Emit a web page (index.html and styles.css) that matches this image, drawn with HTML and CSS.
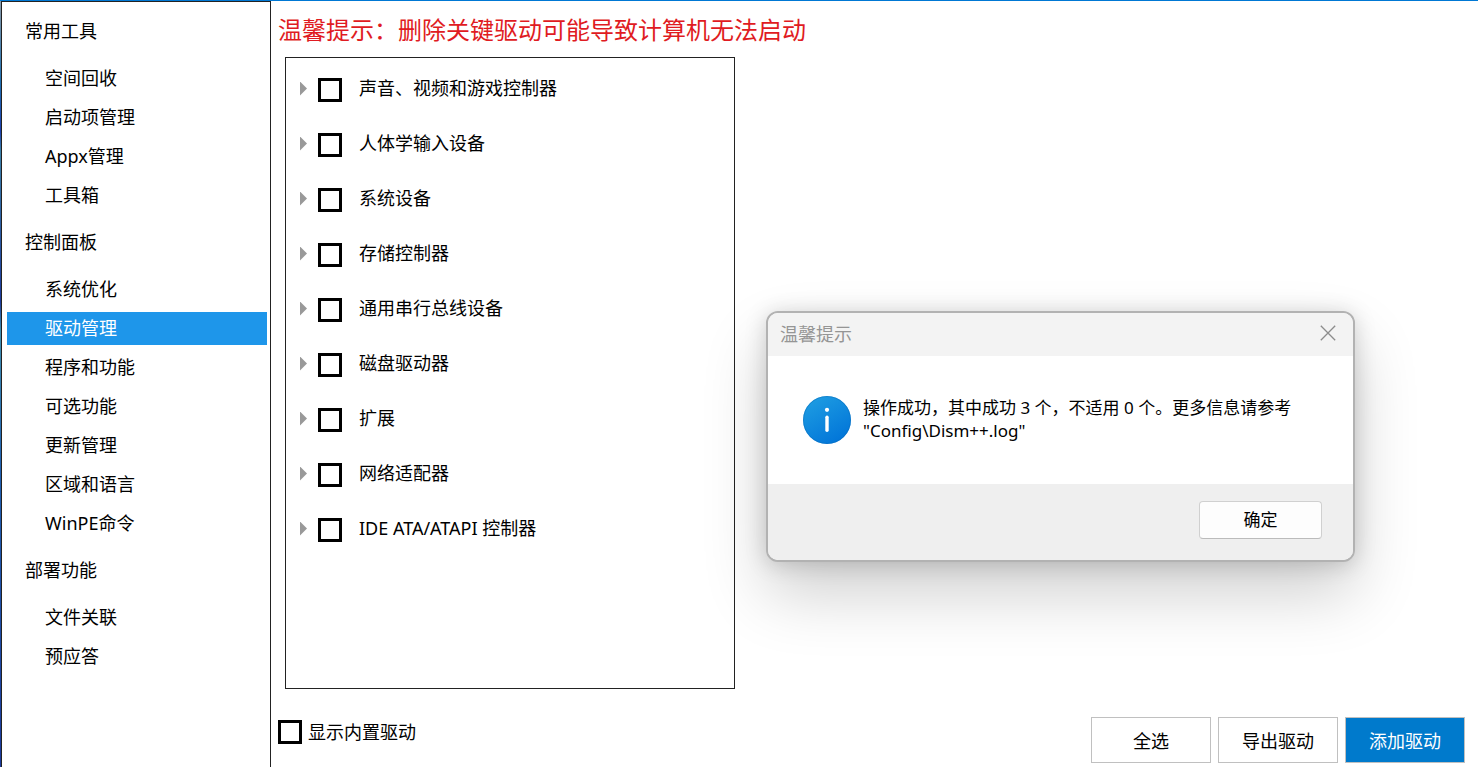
FILE: index.html
```html
<!DOCTYPE html>
<html lang="zh-CN">

<head>
    <meta charset="UTF-8">
    <meta name="viewport" content="width=device-width, initial-scale=1.0">
    <link rel="stylesheet" href="styles.css">
    <title>Dism++</title>
</head>

<body>

    <div class="window">

        <nav class="sidebar">
            <h2>常用工具</h2>
            <ul>
                <li><a href="#">空间回收</a></li>
                <li><a href="#">启动项管理</a></li>
                <li><a href="#">Appx管理</a></li>
                <li><a href="#">工具箱</a></li>
            </ul>
            <h2>控制面板</h2>
            <ul>
                <li><a href="#">系统优化</a></li>
                <li><a href="#" class="active">驱动管理</a></li>
                <li><a href="#">程序和功能</a></li>
                <li><a href="#">可选功能</a></li>
                <li><a href="#">更新管理</a></li>
                <li><a href="#">区域和语言</a></li>
                <li><a href="#">WinPE命令</a></li>
            </ul>
            <h2>部署功能</h2>
            <ul>
                <li><a href="#">文件关联</a></li>
                <li><a href="#">预应答</a></li>
            </ul>
        </nav>

        <main class="content">
            <h1 class="warning">温馨提示：删除关键驱动可能导致计算机无法启动</h1>

            <ul class="driver-tree">
                <li><span class="arrow"></span><input type="checkbox" id="d1"><label for="d1">声音、视频和游戏控制器</label></li>
                <li><span class="arrow"></span><input type="checkbox" id="d2"><label for="d2">人体学输入设备</label></li>
                <li><span class="arrow"></span><input type="checkbox" id="d3"><label for="d3">系统设备</label></li>
                <li><span class="arrow"></span><input type="checkbox" id="d4"><label for="d4">存储控制器</label></li>
                <li><span class="arrow"></span><input type="checkbox" id="d5"><label for="d5">通用串行总线设备</label></li>
                <li><span class="arrow"></span><input type="checkbox" id="d6"><label for="d6">磁盘驱动器</label></li>
                <li><span class="arrow"></span><input type="checkbox" id="d7"><label for="d7">扩展</label></li>
                <li><span class="arrow"></span><input type="checkbox" id="d8"><label for="d8">网络适配器</label></li>
                <li><span class="arrow"></span><input type="checkbox" id="d9"><label for="d9">IDE ATA/ATAPI 控制器</label></li>
            </ul>

            <div class="bottom-bar">
                <div class="show-builtin">
                    <input type="checkbox" id="builtin">
                    <label for="builtin">显示内置驱动</label>
                </div>
                <div class="actions">
                    <button type="button">全选</button>
                    <button type="button">导出驱动</button>
                    <button type="button" class="primary">添加驱动</button>
                </div>
            </div>
        </main>

    </div>

    <!-- message box -->
    <div class="msgbox" role="dialog" aria-labelledby="msg-title">
        <div class="msg-header">
            <span id="msg-title">温馨提示</span>
            <button type="button" class="close-btn" aria-label="关闭">
                <svg width="16" height="16" viewBox="0 0 16 16">
                    <path d="M0.8 0.8 L15.2 15.2 M15.2 0.8 L0.8 15.2" stroke="#8c8c8c" stroke-width="1.3" fill="none" />
                </svg>
            </button>
        </div>
        <div class="msg-body">
            <svg width="48" height="48" viewBox="0 0 48 48">
                <defs>
                    <linearGradient id="info" x1="0.2" y1="0" x2="0.8" y2="1">
                        <stop offset="0" stop-color="#1e9de2" />
                        <stop offset="1" stop-color="#0073d8" />
                    </linearGradient>
                </defs>
                <circle cx="24" cy="24" r="24" fill="url(#info)" />
                <circle cx="24" cy="24" r="23.5" fill="none" stroke="#0a6cb8" stroke-opacity="0.45" />
                <circle cx="24" cy="13.8" r="2.1" fill="#fff" />
                <rect x="22.3" y="19.5" width="3.4" height="16.5" rx="1.7" fill="#fff" />
            </svg>
            <p>操作成功，其中成功 3 个，不适用 0 个。更多信息请参考<br>"Config\Dism++.log"</p>
        </div>
        <div class="msg-footer">
            <button type="button" class="ok-btn">确定</button>
        </div>
    </div>

</body>

</html>
```
FILE: styles.css
```css
* {
    box-sizing: border-box;
}

body {
    margin: 0;
    font-family: "Noto Sans", "Noto Sans CJK SC", sans-serif;
    font-size: 18px;
    color: #000;
    background-color: #fff;
}

h1, h2, ul, p {
    margin: 0;
    padding: 0;
    font-weight: normal;
}

ul {
    list-style: none;
}

button {
    font-family: inherit;
    color: #000;
    padding: 0;
}

.window {
    display: flex;
    min-height: 100vh;
    border-top: 1px solid #0078d4;
    padding-left: 1px;
    background: linear-gradient(#8a9aa8 0, #1f6fb0 80px, #1c3fae 130px, #3a7fa8 150px, #1c3a9c 300px, #3f8fb0 330px, #1f5fb0 470px, #1c3a9c 767px) left / 1px 100% no-repeat;
}

/* left menu */
.sidebar {
    width: 270px;
    flex-shrink: 0;
    padding: 13px 3px 0 5px;
    border: 1px solid #222;
    border-bottom: none;
    background-color: #fff;
}

.sidebar h2 {
    font-size: 18px;
    line-height: 33px;
    padding-left: 18px;
    margin-bottom: 14px;
}

.sidebar ul {
    display: flex;
    flex-direction: column;
    gap: 6px;
    margin-bottom: 14px;
}

.sidebar a {
    display: block;
    height: 33px;
    line-height: 33px;
    padding-left: 38px;
    color: #000;
    text-decoration: none;
}

.sidebar a.active {
    background-color: #1e96ea;
    color: #fff;
}

/* right side */
.content {
    flex: 1;
    display: flex;
    flex-direction: column;
    padding: 8px 13px 4px 7px;
}

.warning {
    font-size: 24px;
    line-height: 42px;
    color: #e01b22;
    margin-bottom: 6px;
}

.driver-tree {
    flex: 1;
    width: 450px;
    margin-left: 7px;
    padding: 4px 14px;
    border: 1px solid #222;
}

.driver-tree li {
    display: flex;
    align-items: center;
    height: 55px;
}

.driver-tree label {
    margin-left: 17px;
    padding-bottom: 6px;
}

.arrow {
    width: 7px;
    height: 14px;
    margin-right: 11px;
    margin-bottom: 2px;
    background-color: #999;
    clip-path: polygon(0 0, 100% 50%, 0 100%);
}

input[type="checkbox"] {
    appearance: none;
    width: 24px;
    height: 24px;
    margin: 0;
    border: 3px solid #000;
    background-color: #fff;
}

input[type="checkbox"]:checked {
    background-color: #1e96ea;
}

.bottom-bar {
    display: flex;
    justify-content: space-between;
    margin-top: 28px;
}

.show-builtin {
    display: flex;
    align-items: center;
    height: 30px;
    gap: 6px;
}

.show-builtin label {
    padding-bottom: 2px;
}

.actions {
    display: flex;
    gap: 7px;
}

.actions button {
    width: 120px;
    height: 46px;
    font-size: 18px;
    border: 1px solid #c0c0c0;
    background-color: #fff;
}

.actions .primary {
    background-color: #007acc;
    color: #fff;
}

/* message box */
.msgbox {
    position: absolute;
    top: 311px;
    right: 123px;
    width: 589px;
    border: 2px solid #b2b2b2;
    border-radius: 12px;
    background-color: #fff;
    overflow: hidden;
    font-size: 17px;
    box-shadow: 0 32px 64px rgba(0, 0, 0, 0.19), 0 2px 21px rgba(0, 0, 0, 0.17);
}

.msg-header {
    display: flex;
    justify-content: space-between;
    align-items: center;
    height: 43px;
    padding: 0 17px 3px 12px;
    font-size: 18px;
    color: #959595;
    background-color: #f3f3f3;
}

.close-btn {
    display: flex;
    border: none;
    background: none;
}

.msg-body {
    display: flex;
    align-items: center;
    gap: 12px;
    height: 128px;
    padding-left: 35px;
}

.msg-body p {
    line-height: 23px;
    padding-bottom: 2px;
}

.msg-footer {
    display: flex;
    justify-content: flex-end;
    height: 76px;
    padding: 17px 31px 0 0;
    background-color: #efefef;
}

.ok-btn {
    width: 123px;
    height: 38px;
    padding-bottom: 3px;
    font-size: 17px;
    border: 1px solid #d0d0d0;
    border-bottom-color: #bbb;
    border-radius: 4px;
    background-color: #fdfdfd;
}
```
